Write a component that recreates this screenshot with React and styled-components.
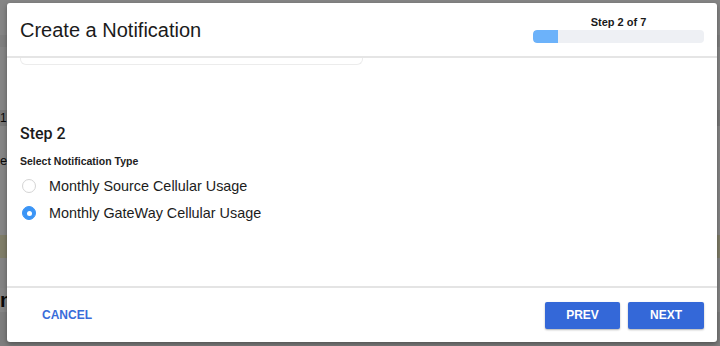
import React, { useState } from "react";
import styled, { createGlobalStyle } from "styled-components";

const Global = createGlobalStyle`
  html, body { margin: 0; padding: 0; }
  body {
    width: 720px;
    height: 346px;
    overflow: hidden;
    font-family: "Liberation Sans", Arial, sans-serif;
    background: #ffffff;
  }
  #root { width: 720px; height: 346px; }
`;

const Stage = styled.div`
  position: relative;
  width: 720px;
  height: 346px;
  overflow: hidden;
`;

/* page behind the dialog (mostly hidden) */
const Page = styled.div`
  display: flex;
  flex-direction: column;
  width: 720px;
  height: 346px;
  background: #ffffff;
`;

const PageBand = styled.div`
  height: ${(p) => p.$h}px;
  flex: none;
  background: ${(p) => p.$bg || "#ffffff"};
  display: flex;
  align-items: center;
  justify-content: space-between;
  font-size: ${(p) => p.$fs || 13}px;
  font-weight: ${(p) => p.$fw || 400};
  color: #111;
  padding: 0 0 0 ${(p) => p.$pl || 0}px;
  white-space: nowrap;
  overflow: hidden;
`;

const Backdrop = styled.div`
  position: absolute;
  inset: 0;
  background: rgba(0, 0, 0, 0.48);
`;

const Dialog = styled.div`
  position: absolute;
  top: 3px;
  left: 7px;
  width: 710px;
  height: 339px;
  background: #ffffff;
  border-radius: 3px;
  box-shadow: 0 2px 5px rgba(0, 0, 0, 0.35);
  display: flex;
  flex-direction: column;
  overflow: hidden;
`;

const Header = styled.div`
  height: 53px;
  flex: none;
  display: flex;
  align-items: center;
  justify-content: space-between;
  padding: 0 13px 0 13px;
  border-bottom: 2px solid #e5e5e5;
`;

const Title = styled.h1`
  margin: 0;
  font-size: 20px;
  font-weight: 400;
  color: #1b1b1b;
  line-height: 24px;
`;

const Progress = styled.div`
  width: 171px;
  display: flex;
  flex-direction: column;
  align-items: center;
  gap: 1px;
`;

const ProgressLabel = styled.div`
  font-size: 11px;
  line-height: 13px;
  font-weight: 700;
  color: #1a1a1a;
`;

const Track = styled.div`
  width: 100%;
  height: 13px;
  border-radius: 4px;
  background: #eef0f4;
  overflow: hidden;
  display: flex;
`;

const Fill = styled.div`
  height: 100%;
  background: #6cb2fa;
  border-radius: 4px 0 0 4px;
`;

const Body = styled.div`
  flex: 1;
  padding: 0 13px;
  display: flex;
  flex-direction: column;
`;

const CardTail = styled.div`
  width: 341px;
  height: 6px;
  border: 1px solid #ececec;
  border-top: none;
  border-radius: 0 0 6px 6px;
`;

const Section = styled.div`
  margin-top: 59px;
  display: flex;
  flex-direction: column;
`;

const StepTitle = styled.h2`
  margin: 0;
  font-family: Roboto, "Liberation Sans", sans-serif;
  font-size: 16px;
  font-weight: 500;
  line-height: 20px;
  color: #1b1b1b;
`;

const FieldLabel = styled.div`
  margin-top: 10px;
  font-size: 10.5px;
  line-height: 14px;
  font-weight: 700;
  color: #222;
`;

const Options = styled.div`
  margin-top: 8px;
  display: flex;
  flex-direction: column;
  gap: 7px;
`;

const Option = styled.label`
  display: flex;
  align-items: center;
  height: 20px;
  gap: 13px;
  padding-left: 2px;
  font-size: 14.4px;
  line-height: 20px;
  color: #1c1c1c;
  cursor: pointer;
`;

const RadioDot = styled.span`
  width: 14px;
  height: 14px;
  box-sizing: border-box;
  border-radius: 50%;
  flex: none;
  display: flex;
  align-items: center;
  justify-content: center;
  background: ${(p) => (p.$on ? "#3b95f6" : "#ffffff")};
  border: 1px solid ${(p) => (p.$on ? "#3b95f6" : "#d4d4d4")};
  &::after {
    content: "";
    width: 5px;
    height: 5px;
    border-radius: 50%;
    background: #ffffff;
    display: ${(p) => (p.$on ? "block" : "none")};
  }
`;

const Footer = styled.div`
  height: 54px;
  flex: none;
  border-top: 2px solid #e4e4e4;
  display: flex;
  align-items: center;
  justify-content: space-between;
  padding: 0 13px 0 21px;
`;

const TextButton = styled.button`
  border: none;
  background: none;
  padding: 6px 14px;
  font-family: "Liberation Sans", Arial, sans-serif;
  font-size: 12px;
  font-weight: 700;
  color: #3a6cd9;
  cursor: pointer;
`;

const Actions = styled.div`
  display: flex;
  gap: 8px;
`;

const PrimaryButton = styled.button`
  border: none;
  height: 27px;
  width: ${(p) => p.$w}px;
  border-radius: 2px;
  background: #3468d8;
  color: #ffffff;
  font-family: "Liberation Sans", Arial, sans-serif;
  font-size: 12px;
  font-weight: 700;
  box-shadow: 0 1px 2px rgba(0, 0, 0, 0.3);
  cursor: pointer;
`;

const options = [
  "Monthly Source Cellular Usage",
  "Monthly GateWay Cellular Usage",
];

export default function App() {
  const [selected, setSelected] = useState(1);
  const step = 2;
  const total = 7;
  return (
    <>
      <Global />
      <Stage>
        <Page>
          <PageBand $h={35} $bg="#ffffff" />
          <PageBand $h={12} $bg="#f4f4f4" />
          <PageBand $h={63} $bg="#ffffff" />
          <PageBand $h={16} $bg="#e6e6e6" $fs={12}>1</PageBand>
          <PageBand $h={24} $bg="#ffffff" />
          <PageBand $h={20} $bg="#ffffff" $fs={13}>er</PageBand>
          <PageBand $h={65} $bg="#ffffff" />
          <PageBand $h={23} $bg="#f3efc8" />
          <PageBand $h={30} $bg="#fbfbfb" />
          <PageBand $h={24} $bg="#ffffff" $fs={20} $fw={700}>nf</PageBand>
          <PageBand $h={34} $bg="#f0f0f0" />
        </Page>
        <Backdrop />
        <Dialog role="dialog" aria-label="Create a Notification">
          <Header>
            <Title>Create a Notification</Title>
            <Progress>
              <ProgressLabel>
                Step {step} of {total}
              </ProgressLabel>
              <Track>
                <Fill style={{ width: `${(step / total) * 171 - 24}px` }} />
              </Track>
            </Progress>
          </Header>
          <Body>
            <CardTail />
            <Section>
              <StepTitle>Step 2</StepTitle>
              <FieldLabel>Select Notification Type</FieldLabel>
              <Options>
                {options.map((o, i) => (
                  <Option key={o} onClick={() => setSelected(i)}>
                    <RadioDot $on={selected === i} />
                    {o}
                  </Option>
                ))}
              </Options>
            </Section>
          </Body>
          <Footer>
            <TextButton>CANCEL</TextButton>
            <Actions>
              <PrimaryButton $w={75}>PREV</PrimaryButton>
              <PrimaryButton $w={76}>NEXT</PrimaryButton>
            </Actions>
          </Footer>
        </Dialog>
      </Stage>
    </>
  );
}
